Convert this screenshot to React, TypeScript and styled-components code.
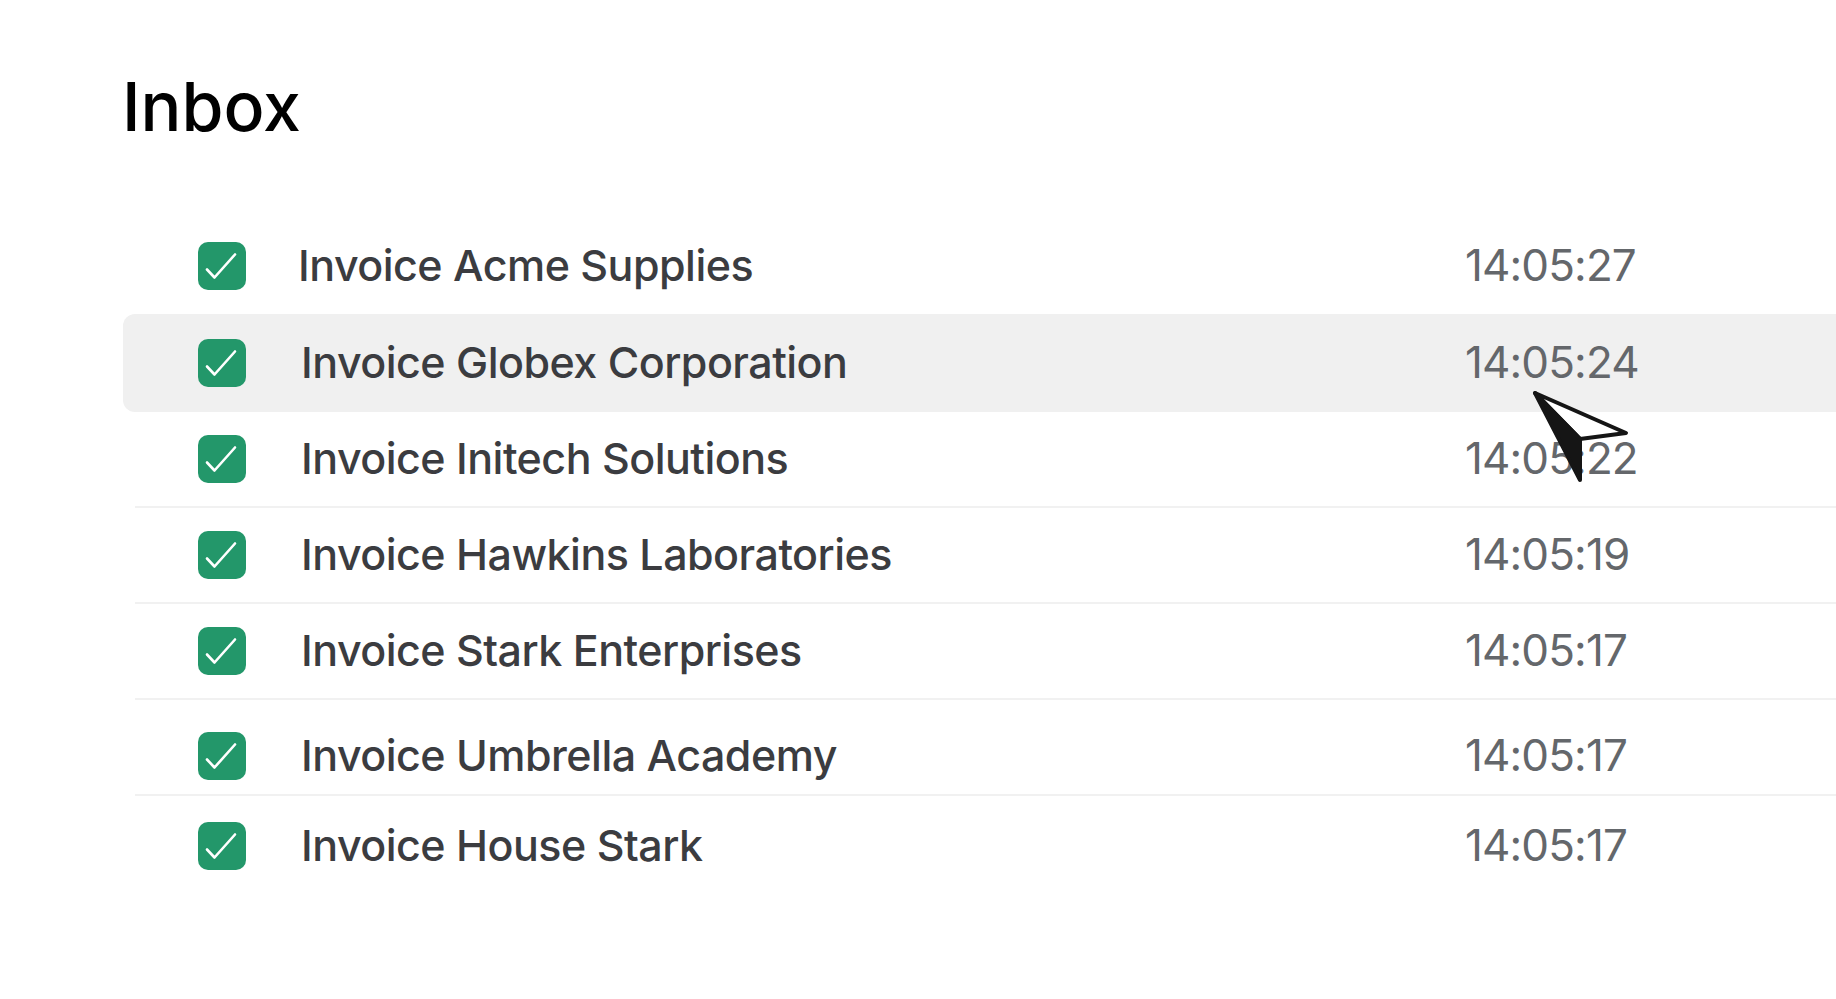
import React from 'react'
import styled, { createGlobalStyle } from 'styled-components'

const GlobalStyle = createGlobalStyle`
  html, body {
    margin: 0;
    padding: 0;
    background: #ffffff;
  }
  body {
    font-family: Inter, "Noto Sans", sans-serif;
    -webkit-font-smoothing: antialiased;
  }
`

const Page = styled.div`
  position: relative;
  width: 1836px;
  height: 999px;
  overflow: hidden;
  padding-top: 72px;
  box-sizing: border-box;
`

const Title = styled.h1`
  margin: 0 0 0 122px;
  font-size: 68px;
  line-height: 1;
  font-weight: 500;
  letter-spacing: 0;
  color: #000000;
`

const List = styled.ul`
  list-style: none;
  margin: 78px 0 0 135px;
  padding: 0;
`

const Row = styled.li<{ $active?: boolean; $divider?: boolean; $lift?: number }>`
  display: grid;
  grid-template-columns: 63px 48px 1fr 371px;
  align-items: center;
  box-sizing: border-box;
  height: ${({ $active }) => ($active ? 98 : 96)}px;
  padding-top: ${({ $lift }) => $lift ?? 0}px;
  border-bottom: ${({ $divider }) => ($divider ? '2px solid #f1f1f1' : 'none')};
  background: ${({ $active }) => ($active ? '#f0f0f0' : 'transparent')};
  margin-left: ${({ $active }) => ($active ? -12 : 0)}px;
  padding-left: ${({ $active }) => ($active ? 12 : 0)}px;
  border-radius: ${({ $active }) => ($active ? '12px 0 0 12px' : '0')};
`

const Box = styled.span`
  grid-column: 2;
  width: 48px;
  height: 48px;
  border-radius: 10px;
  background: #23976a;
  display: flex;
  align-items: center;
  justify-content: center;
`

const Name = styled.span<{ $inset: number }>`
  grid-column: 3;
  padding-left: ${({ $inset }) => $inset}px;
  margin-top: -2px;
  font-size: 43px;
  font-weight: 500;
  letter-spacing: -0.012em;
  color: #3b3c40;
  white-space: nowrap;
`

const Time = styled.span`
  grid-column: 4;
  margin-top: -2px;
  font-size: 44px;
  font-weight: 400;
  letter-spacing: -0.02em;
  color: #64676b;
  white-space: nowrap;
`

const Pointer = styled.svg`
  position: absolute;
  left: 1525px;
  top: 383px;
  width: 112px;
  height: 108px;
  overflow: visible;
`

function Check() {
  return (
    <svg width="48" height="48" viewBox="0 0 48 48" fill="none">
      <path
        d="M9 27.5 L16.5 35.5 L37 12.5"
        stroke="#ffffff"
        strokeWidth="2.6"
        strokeLinecap="round"
        strokeLinejoin="round"
      />
    </svg>
  )
}

type Invoice = {
  name: string
  time: string
  active?: boolean
  divider?: boolean
  lift?: number
  inset?: number
}

const invoices: Invoice[] = [
  { name: 'Invoice Acme Supplies', time: '14:05:27', inset: 52 },
  { name: 'Invoice Globex Corporation', time: '14:05:24', active: true },
  { name: 'Invoice Initech Solutions', time: '14:05:22', divider: true },
  { name: 'Invoice Hawkins Laboratories', time: '14:05:19', divider: true },
  { name: 'Invoice Stark Enterprises', time: '14:05:17', divider: true },
  { name: 'Invoice Umbrella Academy', time: '14:05:17', divider: true, lift: 18 },
  { name: 'Invoice House Stark', time: '14:05:17', lift: 4 },
]

export default function App() {
  return (
    <>
      <GlobalStyle />
      <Page>
        <Title>Inbox</Title>
        <List>
          {invoices.map((inv) => (
            <Row key={inv.name} $active={inv.active} $divider={inv.divider} $lift={inv.lift}>
              <Box>
                <Check />
              </Box>
              <Name $inset={inv.inset ?? 55}>{inv.name}</Name>
              <Time>{inv.time}</Time>
            </Row>
          ))}
        </List>
        <Pointer viewBox="0 0 112 108">
          {/* white upper wing */}
          <path
            d="M10 10 L101 50 L55 56 Z"
            fill="#ffffff"
            stroke="#151515"
            strokeWidth="4"
            strokeLinejoin="round"
          />
          {/* dark lower wing */}
          <path
            d="M10 10 L55 56 L55 97 Z"
            fill="#151515"
            stroke="#151515"
            strokeWidth="4"
            strokeLinejoin="round"
          />
        </Pointer>
      </Page>
    </>
  )
}
